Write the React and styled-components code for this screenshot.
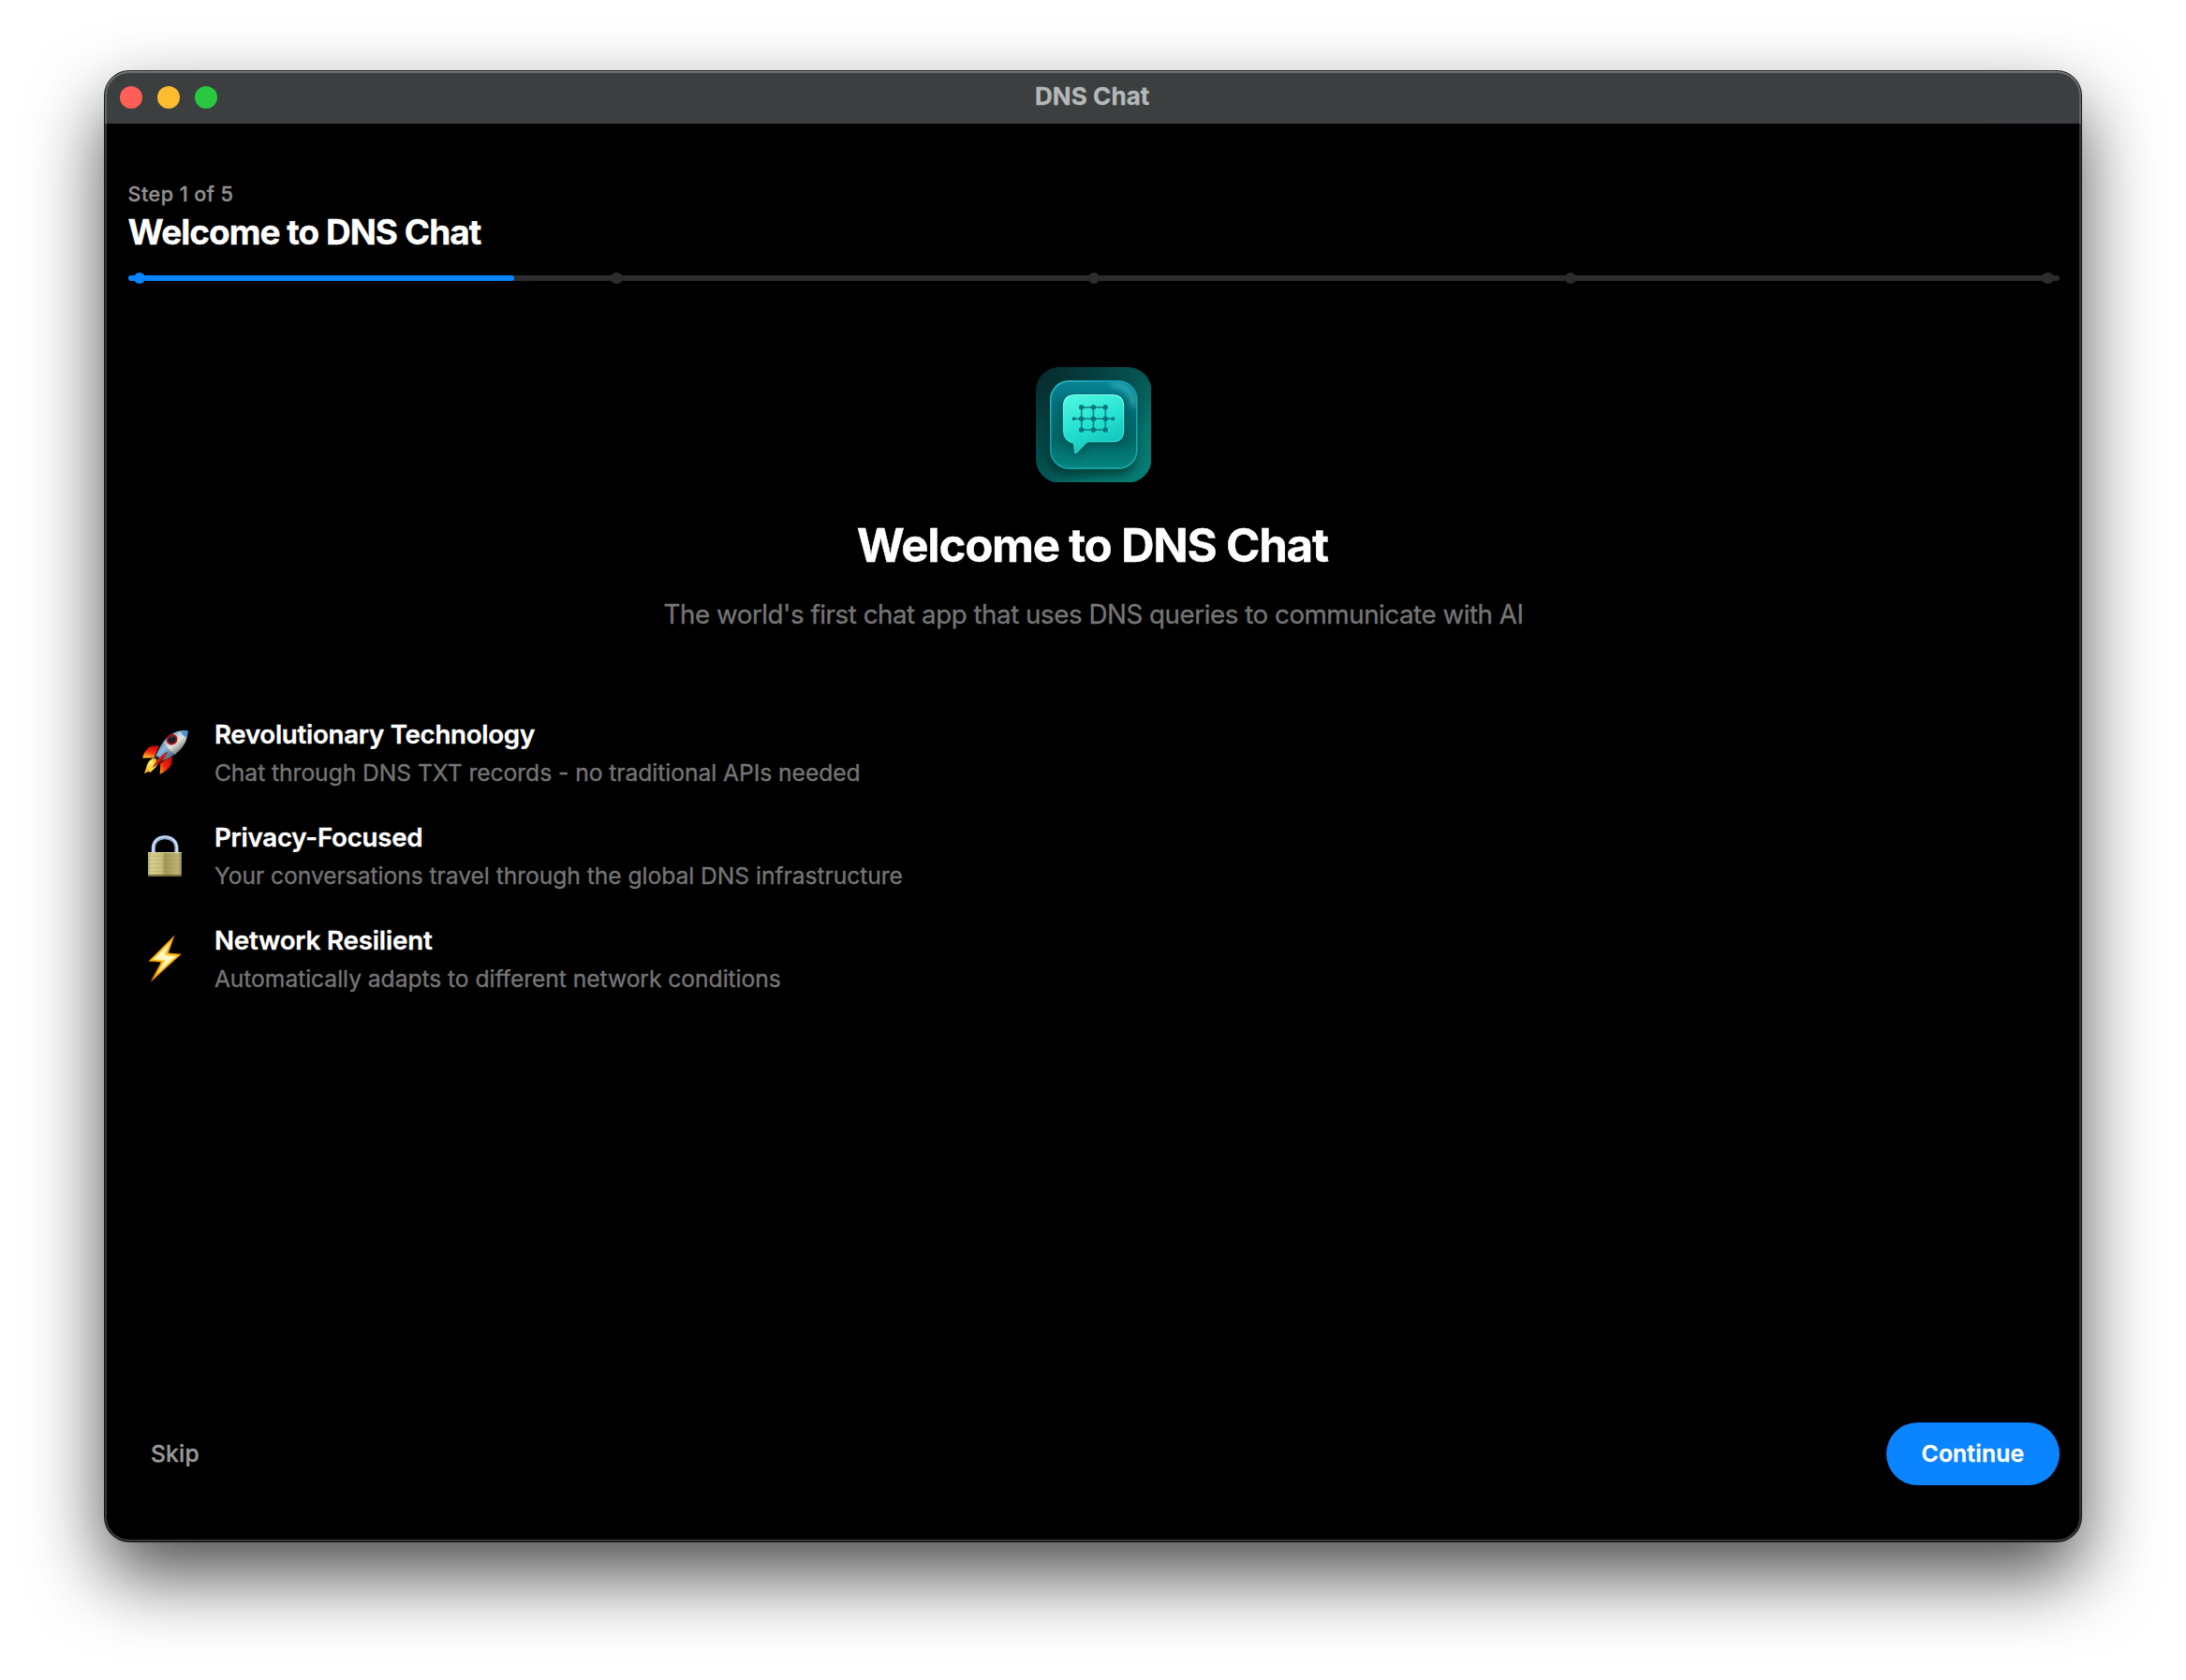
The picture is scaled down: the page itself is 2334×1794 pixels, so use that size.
import React from 'react';
import styled, { createGlobalStyle } from 'styled-components';

const GlobalStyle = createGlobalStyle`
  * { box-sizing: border-box; }
  html, body { margin: 0; background: #fff; }
  body {
    font-family: Inter, "Liberation Sans", sans-serif;
    -webkit-font-smoothing: antialiased;
    -webkit-text-stroke: 0.35px currentColor;
  }
`;

const Desktop = styled.div`
  width: 2334px;
  height: 1794px;
  padding: 76px 112px 0;
  overflow: hidden;
  background: #fff;
`;

const Window = styled.main`
  position: relative;
  display: flex;
  flex-direction: column;
  width: 2110px;
  height: 1570px;
  border-radius: 26px;
  background: #000;
  box-shadow: 0 0 0 1px rgba(0, 0, 0, 0.88), 0 36px 80px rgba(0, 0, 0, 0.7);

  &::after {
    content: '';
    position: absolute;
    inset: 0;
    border-radius: inherit;
    box-shadow: inset 0 0 0 2px rgba(255, 255, 255, 0.21), inset 0 1px 0 rgba(255, 255, 255, 0.18);
    pointer-events: none;
  }
`;

const TitleBar = styled.header`
  display: grid;
  grid-template-columns: 1fr auto 1fr;
  align-items: center;
  height: 56px;
  padding: 0 16px;
  border-radius: 26px 26px 0 0;
  background: linear-gradient(90deg, #3b3f3f 94%, #3b3f42 97%);
`;

const TrafficLights = styled.div`
  display: flex;
  gap: 16px;
`;

const Light = styled.span`
  width: 24px;
  height: 24px;
  border-radius: 50%;
  background: ${(p) => p.$color};
`;

const WindowTitle = styled.div`
  padding: 0 1.5px 2px 0;
  color: #b4b8b8;
  font-size: 26px;
  font-weight: 700;
  line-height: 54px;
  letter-spacing: 0.08px;
`;

const Screen = styled.section`
  display: flex;
  flex: 1;
  flex-direction: column;
  padding: 62px 23px 60px 24.6px;
`;

const StepLabel = styled.div`
  color: #8f8f8f;
  font-size: 21.56px;
  font-weight: 500;
  line-height: 26px;
  letter-spacing: 0.46px;
`;

const StepTitle = styled.h2`
  margin: 5px 0 20.5px;
  color: #fff;
  font-size: 36.96px;
  font-weight: 700;
  line-height: 45px;
  letter-spacing: -0.97px;
`;

const Track = styled.div`
  display: grid;
  align-items: center;
  height: 12.4px;

  > * { grid-area: 1 / 1; }
`;

const Rail = styled.div`
  width: ${(p) => p.$width};
  height: 6.4px;
  border-radius: 4px;
  background: ${(p) => p.$color};
`;

const Dots = styled.div`
  display: flex;
  justify-content: space-between;
  padding: 0 6.3px;
`;

const Dot = styled.span`
  width: 12.4px;
  height: 12.4px;
  border-radius: 50%;
  background: ${(p) => (p.$active ? '#0a84ff' : '#2c2c2e')};
`;

const Hero = styled.div`
  display: flex;
  flex-direction: column;
  align-items: center;
  margin-top: 89px;

  svg { display: block; }
`;

const Heading = styled.h1`
  margin: 37.1px 0 23.4px;
  padding-right: 3px;
  color: #fff;
  font-size: 49.28px;
  font-weight: 700;
  line-height: 60px;
  letter-spacing: -1.26px;
`;

const Subtitle = styled.p`
  margin: 0;
  padding-right: 0.5px;
  color: #757575;
  font-size: 27.72px;
  line-height: 40px;
  letter-spacing: -0.455px;
`;

const FeatureList = styled.ul`
  display: flex;
  flex-direction: column;
  gap: 37px;
  margin: 91px 0 0;
  padding: 0 0 0 15.4px;
  list-style: none;
`;

const Feature = styled.li`
  display: flex;
  align-items: center;
  gap: 26.9px;
  height: 73px;

  svg { margin-top: 2px; }
`;

const FeatureText = styled.div`
  display: flex;
  flex-direction: column;
  gap: 9px;
`;

const FeatureTitle = styled.h3`
  margin: 0;
  color: #fff;
  font-size: 27.72px;
  font-weight: 600;
  line-height: 34px;
  letter-spacing: ${(p) => p.$tracking}px;
`;

const FeatureDescription = styled.p`
  margin: 0;
  color: #757575;
  font-size: 24.64px;
  line-height: 30px;
  letter-spacing: -0.04px;
`;

const Footer = styled.footer`
  display: flex;
  align-items: center;
  justify-content: space-between;
  margin-top: auto;
`;

const Button = styled.button`
  height: 67px;
  padding: 0 ${(p) => (p.$primary ? 37.8 : 24.4)}px 1px;
  border: 0;
  border-radius: 34px;
  background: ${(p) => (p.$primary ? '#0a84ff' : 'transparent')};
  color: ${(p) => (p.$primary ? '#fff' : '#999')};
  font-family: inherit;
  font-size: 24.64px;
  font-weight: ${(p) => (p.$primary ? 600 : 500)};
  line-height: 30px;
  letter-spacing: 0.2px;
  -webkit-text-stroke: 0.35px currentColor;
`;

const AppIcon = () => (
  <svg width="123.4" height="123.4" viewBox="0 0 123.4 123.4">
    <defs>
      <linearGradient id="base" x1="0" y1="0" x2="1" y2="1">
        <stop offset="0" stopColor="#08262a" />
        <stop offset="0.45" stopColor="#06504f" />
        <stop offset="0.75" stopColor="#06736d" />
        <stop offset="1" stopColor="#078078" />
      </linearGradient>
      <linearGradient id="tile" x1="0" y1="0" x2="0" y2="1">
        <stop offset="0" stopColor="#078494" />
        <stop offset="0.3" stopColor="#046d78" />
        <stop offset="0.65" stopColor="#026664" />
        <stop offset="1" stopColor="#058480" />
      </linearGradient>
      <linearGradient id="rim" x1="0" y1="0" x2="1" y2="1">
        <stop offset="0" stopColor="#2ab9c6" />
        <stop offset="0.35" stopColor="#139bab" />
        <stop offset="0.7" stopColor="#0fa7a4" />
        <stop offset="1" stopColor="#20aaa2" />
      </linearGradient>
      <linearGradient id="bubble" x1="0.2" y1="0" x2="0.6" y2="1">
        <stop offset="0" stopColor="#4df5e0" />
        <stop offset="0.5" stopColor="#25e2d2" />
        <stop offset="1" stopColor="#10c0b8" />
      </linearGradient>
      <linearGradient id="bubbleRim" x1="0" y1="0" x2="0" y2="1">
        <stop offset="0" stopColor="#8dffee" />
        <stop offset="1" stopColor="#25d3c6" />
      </linearGradient>
      <clipPath id="baseClip"><rect width="123.4" height="123.4" rx="25" /></clipPath>
      <clipPath id="tileClip"><rect x="15.3" y="14.6" width="93" height="94" rx="20" /></clipPath>
      <filter id="soft" x="-50%" y="-50%" width="200%" height="200%"><feGaussianBlur stdDeviation="5" /></filter>
      <filter id="glow" filterUnits="userSpaceOnUse" x="0" y="0" width="124" height="124"><feGaussianBlur stdDeviation="3" /></filter>
    </defs>
    <g clipPath="url(#baseClip)">
      <rect width="123.4" height="123.4" fill="url(#base)" />
      <rect x="12" y="18" width="95" height="97" rx="20" fill="#02312f" opacity="0.75" filter="url(#soft)" />
    </g>
    <rect x="15.3" y="14.6" width="93" height="94" rx="20" fill="url(#tile)" />
    <g clipPath="url(#tileClip)">
      <path d="M80 18C96 18 104 28 105 42" fill="none" stroke="#43c8cf" strokeWidth="6" opacity="0.7" filter="url(#glow)" />
      <path d="M29 36H95V83H58L43 95L37 84L29 78Z" fill="#01423f" opacity="0.55" filter="url(#soft)" />
    </g>
    <rect x="15.8" y="15.1" width="92" height="93" rx="19.5" fill="none" stroke="url(#rim)" strokeWidth="1.6" />
    <path
      d="M42 29.8H81.5Q93.7 29.8 93.7 42V67.5Q93.7 79.7 81.5 79.7H54.8L43.4 91.4Q41.6 92.5 41.4 90.2L40.6 81.6Q29.4 78.5 29.4 67.5V42Q29.4 29.8 42 29.8Z"
      fill="url(#bubble)"
      stroke="url(#bubbleRim)"
      strokeWidth="1.1"
    />
    <g fill="none" stroke="#0a7f80" strokeWidth="1.5">
      <path d="M48.7 43H74.3V67H48.7ZM61.4 43V67M40.7 55.2H82.3" />
    </g>
    <g fill="#08777a">
      {[48.7, 61.4, 74.3].map((x) => [43, 55.2, 67].map((y) => <circle key={`${x}-${y}`} cx={x} cy={y} r="2.7" />))}
      <circle cx="40.7" cy="55.2" r="1.9" />
      <circle cx="82.3" cy="55.2" r="1.9" />
    </g>
  </svg>
);

const RocketIcon = () => (
  <svg width="50" height="50" viewBox="0 0 50 50">
    <defs>
      <linearGradient id="hull" x1="0.25" y1="0.2" x2="0.7" y2="0.75">
        <stop offset="0" stopColor="#3f78ae" />
        <stop offset="0.3" stopColor="#b4cbdc" />
        <stop offset="0.55" stopColor="#e4e4df" />
        <stop offset="1" stopColor="#73786f" />
      </linearGradient>
      <linearGradient id="tail" x1="0" y1="0" x2="1" y2="1">
        <stop offset="0" stopColor="#3c77b3" />
        <stop offset="0.4" stopColor="#8cb9de" />
        <stop offset="1" stopColor="#123f6b" />
      </linearGradient>
      <linearGradient id="finLeft" x1="0.6" y1="0" x2="0.3" y2="1">
        <stop offset="0" stopColor="#c20d08" />
        <stop offset="0.5" stopColor="#f52a0b" />
        <stop offset="1" stopColor="#ffc62c" />
      </linearGradient>
      <linearGradient id="finRight" x1="1" y1="0" x2="0" y2="1">
        <stop offset="0" stopColor="#a90805" />
        <stop offset="0.6" stopColor="#f32409" />
        <stop offset="1" stopColor="#ff9e19" />
      </linearGradient>
      <linearGradient id="flame" x1="1" y1="0" x2="0" y2="1">
        <stop offset="0" stopColor="#d98608" />
        <stop offset="0.4" stopColor="#fff06a" />
        <stop offset="1" stopColor="#ffa60d" />
      </linearGradient>
    </defs>
    <path d="M18 17.5Q10 16.5 6.5 19.5Q1.5 24 0.2 30.6L12.5 30.2Z" fill="url(#finLeft)" />
    <path d="M31.5 27.5Q32.5 35 30.2 38.8Q26 44.5 18.7 47.7L19.2 36Z" fill="url(#finRight)" />
    <path d="M12 30.5C7 32.5 5 37 4.2 40.5L2 47L7 44.8L8.5 46L14 40.5L17.5 36L17 31Z" fill="url(#flame)" />
    <path d="M48.3 1.2C39 0.2 29.5 3.6 23.5 11.8C20 16.8 16.5 23 14.3 29L18.8 34C25 31.8 31.5 28.8 36.5 25.2C44.5 19 48.8 10 48.3 1.2Z" fill="url(#hull)" />
    <path d="M48.3 1.2C45.7 0.8 43 1 40.5 1.6C42 5 44.5 7.5 47.5 9.2C48.2 6.5 48.5 4 48.3 1.2Z" fill="#4f93cc" />
    <path d="M22.4 13.4C19.3 18.4 16.4 23.5 14.3 29L18.8 34C25 31.8 30.6 29.2 35.2 26.1C29.8 23.5 25.5 19.4 22.4 13.4Z" fill="url(#tail)" />
    <path d="M22.4 13.4C25.5 19.4 29.8 23.5 35.2 26.1" fill="none" stroke="#b8a67f" strokeWidth="0.8" />
    <path d="M13.2 29.2L16.3 28.2L19.7 32L18 35L15.5 33.5Z" fill="#1b2830" />
    <path d="M27.2 23.8C20 27 15 33 10.5 41C17 37 24 32.5 27.2 23.8Z" fill="#b80c07" />
    <path d="M25 27C20.5 29.3 16.8 33 13.5 37.7" fill="none" stroke="#ff5a25" strokeWidth="0.8" />
    <ellipse cx="31.6" cy="10.7" rx="5.3" ry="4.8" transform="rotate(-35 31.6 10.7)" fill="#171c25" stroke="#bd1118" strokeWidth="1.7" />
    <path d="M29.5 9Q31 7.4 33.3 7.8" fill="none" stroke="#66717d" strokeWidth="0.7" />
  </svg>
);

const LockIcon = () => (
  <svg width="50" height="50" viewBox="0 0 50 50">
    <defs>
      <linearGradient id="brass" x1="0" y1="0" x2="1" y2="0">
        <stop offset="0" stopColor="#b6ad68" />
        <stop offset="0.1" stopColor="#d5cd8c" />
        <stop offset="0.42" stopColor="#c6bd79" />
        <stop offset="0.5" stopColor="#a09656" />
        <stop offset="0.9" stopColor="#bdb575" />
        <stop offset="1" stopColor="#86804b" />
      </linearGradient>
      <linearGradient id="steel" x1="0" y1="0" x2="1" y2="0">
        <stop offset="0" stopColor="#9ab6e0" />
        <stop offset="0.5" stopColor="#8aa5cf" />
        <stop offset="1" stopColor="#9ab6e0" />
      </linearGradient>
    </defs>
    <path d="M11.8 22V17C11.8 9.5 17 5.1 24.1 5.1S36.5 9.5 36.5 17V22" fill="none" stroke="url(#steel)" strokeWidth="4.2" />
    <path d="M11.4 22V17C11.4 9 17 4.6 24.1 4.6S36.9 9 36.9 17V22" fill="none" stroke="#e0ebfc" strokeWidth="1.3" />
    <rect x="6" y="21" width="36" height="25.7" rx="0.7" fill="url(#brass)" />
    <path d="M6.5 25.5H41.5M6.5 29.5H41.5M6.5 33.5H41.5M6.5 37.5H41.5M6.5 41.5H41.5" stroke="#8c8348" strokeWidth="0.6" opacity="0.3" />
    <path d="M6 21.5H42" stroke="#e0da9e" strokeWidth="1" />
    <path d="M6 45.8H42" stroke="#6d6433" strokeWidth="1.6" />
  </svg>
);

const BoltIcon = () => (
  <svg width="50" height="50" viewBox="0 0 50 50">
    <defs>
      <linearGradient id="bolt" x1="0" y1="0" x2="0" y2="1">
        <stop offset="0" stopColor="#ffae18" />
        <stop offset="0.5" stopColor="#ffbc16" />
        <stop offset="1" stopColor="#f79a12" />
      </linearGradient>
    </defs>
    <path d="M34 0.3L7 27.3L20.2 28.2L9.5 48.8L41.2 20.1L27.5 18.7Z" fill="url(#bolt)" />
    <path d="M34 0.3L7 27.3L20.2 28.2L9.5 48.8L41.2 20.1L27.5 18.7Z" fill="none" stroke="#e87d08" strokeWidth="0.6" />
    <path d="M29.7 7.5L11.7 25.5L24.2 26.4L16.3 40L36 21.9L23.9 20.7Z" fill="#fff7c9" stroke="#ffe04a" strokeWidth="0.8" />
  </svg>
);

const FEATURES = [
  {
    Icon: RocketIcon,
    title: 'Revolutionary Technology',
    tracking: -0.3,
    description: 'Chat through DNS TXT records - no traditional APIs needed',
  },
  {
    Icon: LockIcon,
    title: 'Privacy-Focused',
    tracking: -0.26,
    description: 'Your conversations travel through the global DNS infrastructure',
  },
  {
    Icon: BoltIcon,
    title: 'Network Resilient',
    tracking: -0.19,
    description: 'Automatically adapts to different network conditions',
  },
];

const STEPS = [1, 2, 3, 4, 5];
const CURRENT_STEP = 1;

export default function App() {
  return (
    <>
      <GlobalStyle />
      <Desktop>
        <Window>
          <TitleBar>
            <TrafficLights>
              <Light $color="#ff5f57" />
              <Light $color="#febc2e" />
              <Light $color="#28c840" />
            </TrafficLights>
            <WindowTitle>DNS Chat</WindowTitle>
          </TitleBar>
          <Screen>
            <StepLabel>Step 1 of 5</StepLabel>
            <StepTitle>Welcome to DNS Chat</StepTitle>
            <Track>
              <Rail $width="100%" $color="#2c2c2e" />
              <Rail $width={`${(CURRENT_STEP / STEPS.length) * 100}%`} $color="#0a84ff" />
              <Dots>
                {STEPS.map((step) => (
                  <Dot key={step} $active={step <= CURRENT_STEP} />
                ))}
              </Dots>
            </Track>
            <Hero>
              <AppIcon />
              <Heading>Welcome to DNS Chat</Heading>
              <Subtitle>The world's first chat app that uses DNS queries to communicate with AI</Subtitle>
            </Hero>
            <FeatureList>
              {FEATURES.map(({ Icon, title, tracking, description }) => (
                <Feature key={title}>
                  <Icon />
                  <FeatureText>
                    <FeatureTitle $tracking={tracking}>{title}</FeatureTitle>
                    <FeatureDescription>{description}</FeatureDescription>
                  </FeatureText>
                </Feature>
              ))}
            </FeatureList>
            <Footer>
              <Button>Skip</Button>
              <Button $primary>Continue</Button>
            </Footer>
          </Screen>
        </Window>
      </Desktop>
    </>
  );
}
